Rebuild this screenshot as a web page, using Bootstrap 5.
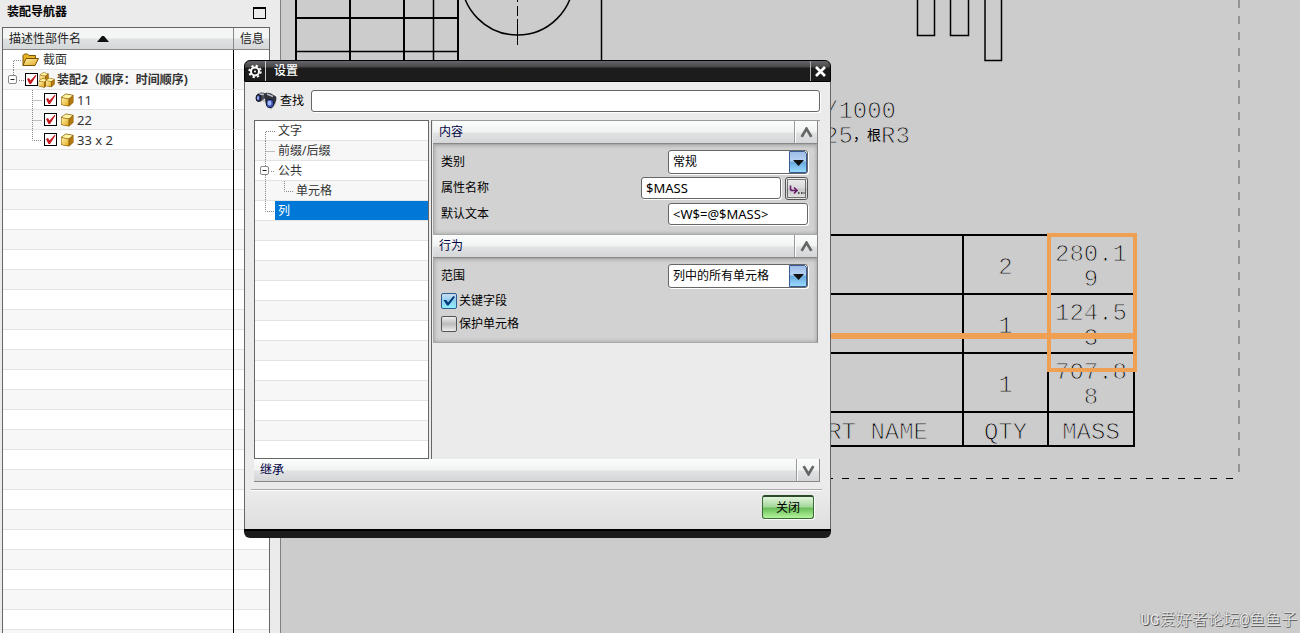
<!DOCTYPE html>
<html lang="zh-CN">
<head>
<meta charset="utf-8">
<meta name="viewport" content="width=device-width, initial-scale=1">
<title>设置</title>
<link href="https://cdn.jsdelivr.net/npm/bootstrap@5.3.0/dist/css/bootstrap.min.css" rel="stylesheet">
<script src="https://cdn.jsdelivr.net/npm/bootstrap@5.3.0/dist/js/bootstrap.bundle.min.js"></script>
<style>
  body { font: 12px/20px "Noto Sans", "Noto Sans CJK SC", sans-serif; color: #000; background: #ccc; }
  svg { display: block; flex: none; }
  .latin { font-size: 13px; }

  /* navigator */
  .navigator { width: 281px; background: #ebebeb; border-right: 1px solid #808080; padding: 0 10px 0 2px; }
  .navigator h1 { font-size: 12px; line-height: 20px; height: 27px; padding: 2px 4px 0 5px; }
  .max-btn { width: 13px; height: 12px; margin-top: 5px; border: 1px solid #000; border-top-width: 2px; background: none; padding: 0; }
  .parts-frame { border: 1px solid #666; border-bottom: 0; background: #fff; min-height: 0; }
  .parts { height: 100%; table-layout: fixed; border-collapse: separate; border-spacing: 0; }
  .parts th { height: 22px; padding: 0 0 0 6px; white-space: nowrap; font-weight: 400; color: #222; background: linear-gradient(#f4f5f5 0 10px, #dfe1e2 11px, #d5d8d9); border-bottom: 1px solid #888; }
  .parts th + th { width: 36px; border-left: 1px solid #888; }
  .parts td { height: 20px; padding: 0; border-bottom: 1px solid #e3e3e3; color: #333; }
  .parts td + td { border-left: 1px solid #000; }
  .parts tr:nth-child(even) td { background: #f7f7f7; }
  .parts td > div { height: 19px; }
  .parts tr.filler:last-child td { height: auto; border-bottom: 0; background: repeating-linear-gradient(#f7f7f7 0 19px, #e3e3e3 19px 20px, #fff 20px 39px, #e3e3e3 39px 40px); }
  .part-icon { margin: 0 3px; }
  .part-check { appearance: none; width: 13px; height: 13px; flex: none; margin: 0; border: 1px solid #000; background: #fff; }
  .part-check:checked { background: #fff url("data:image/svg+xml,%3Csvg xmlns='http://www.w3.org/2000/svg' viewBox='0 0 11 11'%3E%3Cpath d='M1 5l2-1 1.500 2.500L9.500 1 10.500 1.500 5 10H3.500z' fill='%23c4161c'/%3E%3C/svg%3E"); }

  /* bill of materials on the sheet; the background-coloured stroke thins the letters to pen lines */
  .bom { position: absolute; top: 234px; left: 319px; width: 535px; font: 24px/25px "Liberation Mono", monospace; color: #000; -webkit-text-stroke: 1px #ccc; text-align: center; border-collapse: collapse; table-layout: fixed; }
  .bom td, .bom th { height: 59px; padding: 6px 0 1px; border: 2px solid #000; vertical-align: middle; font-weight: 400; }
  .bom tfoot th { height: 34px; padding: 6px 0 0; }
  .bom tfoot th:first-child { text-align: right; padding-right: 34px; }
  .bom .qty { width: 85px; }
  .bom .mass { width: 86px; }
  .bom .mass span { display: block; white-space: nowrap; }
  .mark-frame { position: absolute; top: 233px; left: 766px; width: 90px; height: 139px; border: 4px solid #f0a052; }
  .mark-line { position: absolute; top: 333px; left: 540px; width: 315px; height: 6px; background: #f0a052; }
  .cad-note { font: 24px "Liberation Mono", "Noto Sans CJK SC", monospace; fill: #000; stroke: #ccc; stroke-width: 1px; }
  .cad-han { font-size: 14px; stroke: none; }
  .credit { position: absolute; right: 3px; bottom: 0; font: 300 16px/24px "Liberation Mono", "Noto Sans CJK SC", monospace; color: #e8e8e8; text-shadow: -1px 0 #999, 1px 1px #555; }

  /* floating dialog */
  .dlg { position: absolute; top: 60px; left: 244px; width: 587px; border: 0; }
  .dlg-title { height: 22px; border: 1px solid #000; border-radius: 6px 6px 0 0; background: linear-gradient(#66666a, #48484b 6px, #1c1c1c 7px); color: #fff; }
  .dlg-title h2 { font-size: 12px; line-height: 20px; font-weight: 500; padding-left: 8px; border-left: 1px solid #ccc; }
  .dlg-title button { width: 20px; height: 20px; padding: 0; background: none; border: 0; border-left: 1px solid #aaa; }
  .dlg-main { background: linear-gradient(#ebebeb 0 410px, #dedede); border: solid #666; border-width: 0 1px; padding: 8px 10px 10px 9px; }
  .dlg-foot { height: 9px; background: #1c1c1c; border-top: 2px solid #000; border-radius: 0 0 6px 6px; }
  .field { height: 22px; border: 1px solid #666; border-radius: 3px; background-color: #fff; padding: 0 4px; color: #000; line-height: 18px; box-shadow: 1px 1px 0 #fff; min-width: 0; }
  .find-label { padding: 0 7px 0 2px; }
  .w-field { width: 140px; }
  select.field { appearance: none; height: 24px; font-size: 12px; background: #fff url("data:image/svg+xml,%3Csvg xmlns='http://www.w3.org/2000/svg' width='18' height='22'%3E%3Cdefs%3E%3ClinearGradient id='g' x2='0' y2='1'%3E%3Cstop stop-color='%239dbce6'/%3E%3Cstop offset='.45' stop-color='%23b8d3f2'/%3E%3Cstop offset='.5' stop-color='%2368a8dd'/%3E%3Cstop offset='1' stop-color='%239bdcff'/%3E%3C/linearGradient%3E%3C/defs%3E%3Cpath d='M.5.500h15l2 2V21.500H.500z' fill='url(%23g)' stroke='%23365a94'/%3E%3Cpath d='M4 9h11l-5.500 6z' fill='%23111'/%3E%3C/svg%3E") no-repeat right 0 top 0; }
  .settings-tree { width: 175px; min-height: 339px; border: 1px solid #666; background: #fff repeating-linear-gradient(#fff 0 19px, #e3e3e3 19px 20px, #f7f7f7 20px 39px, #e3e3e3 39px 40px); color: #333; }
  .settings-tree li { height: 20px; }
  .settings-tree a { color: inherit; text-decoration: none; line-height: 20px; padding-left: 3px; }
  .settings-tree .active { background: #0078d7; color: #fff; height: 19px; }
  .options { border-left: 1px solid #666; border-top: 1px solid #999; margin-left: 2px; padding: 0 2px 0 1px; }
  .bar { height: 23px; background: linear-gradient(#fbfcfc, #f1f3f3 11px, #e0e2e3 12px, #d4d6d8); border-bottom: 1px solid #888; border-right: 1px solid #888; }
  .bar h3 { font-size: 12px; line-height: 22px; font-weight: 400; color: #004; padding-left: 6px; }
  .bar button { width: 23px; padding: 0; border: 0; border-left: 1px solid #999; background: none; box-shadow: inset 1px 0 #fff; }
  .group { background: #d2d2d2; border: 1px solid #aaa; border-right-color: #888; box-shadow: inset 0 0 4px #999; padding: 4px 9px 7px 7px; }
  .option-row { height: 26px; }
  .check-row { height: 23px; }
  .check-row label { padding-left: 2px; }
  .tick { appearance: none; width: 16px; height: 16px; margin: 0; border: 1px solid #555; border-radius: 2px; background: linear-gradient(#eee, #bbb 7px, #eee); }
  .tick:checked { border-color: #2e5c8c; background: url("data:image/svg+xml,%3Csvg xmlns='http://www.w3.org/2000/svg' viewBox='0 0 14 14'%3E%3Cpath d='M1.500 6h3L6 8.500 11.500 2 13 3 6.500 11.500H5z' fill='%23003a78'/%3E%3C/svg%3E"), linear-gradient(#c9dcf0, #8fd0f0 7px, #8ff0ff); }
  .pick { width: 23px; height: 23px; padding: 1px; border: 1px solid #555; border-radius: 3px; background: linear-gradient(#eee, #d8d8d8 10px, #c8c8c8 11px, #e4e4e4); }
  .rule { border-top: 1px solid #aaa; border-bottom: 1px solid #fff; height: 2px; margin: 7px -2px 4px -3px; }
  .close-btn { width: 52px; height: 24px; margin-right: 6px; border: 1px solid #3a6a35; border-top: 2px solid #2c4a2a; border-radius: 3px; padding: 0; line-height: 20px; color: #000; background: linear-gradient(#e2f4dc, #a3d798 10px, #68bd57 11px, #b4f49d); box-shadow: 1px 1px 0 #fff; }
</style>
</head>
<body class="vh-100 overflow-hidden d-flex position-relative">

<svg width="0" height="0" class="position-absolute" aria-hidden="true">
  <defs>
    <linearGradient id="gold" x1="0" y1="0" x2="1" y2="1"><stop stop-color="#fff3a8"/><stop offset="1" stop-color="#dfa820"/></linearGradient>
    <symbol id="cube" viewBox="0 0 14 14">
      <path d="M1 4l5-3.500 7.500 1.500v7.500L9 13.500 1 12z" fill="#8a5a08"/>
      <path d="M1.500 4.300L6 1.200l6.500 1.300L9 5.400z" fill="#fff2a0"/>
      <path d="M1.500 5l7 1v6.700l-7-1.200z" fill="url(#gold)"/>
      <path d="M9.500 6l3.500-3v6l-3.500 4z" fill="#b47a10"/>
    </symbol>
    <symbol id="branch" viewBox="0 0 41 20">
      <path d="M29.500 0v20M29.500 10.500h9" fill="none" stroke="#888" stroke-dasharray="1 1"/>
    </symbol>
    <symbol id="minus" viewBox="0 0 10 10">
      <rect x=".5" y=".5" width="8" height="8" rx="1.500" fill="#fff" stroke="#888"/><path d="M2.500 4.500h4" stroke="#222"/>
    </symbol>
    <symbol id="chevron" viewBox="0 0 12 10"><path d="M1.500 9L6 1.500 10.500 9" fill="none" stroke="#666" stroke-width="2.500"/></symbol>
  </defs>
</svg>

<aside class="navigator d-flex flex-column h-100 flex-shrink-0">
  <h1 class="m-0 fw-bold d-flex justify-content-between">装配导航器<button class="max-btn" aria-label="最大化"></button></h1>
  <div class="parts-frame flex-grow-1">
    <table class="parts w-100">
      <thead>
        <tr><th><span class="d-flex align-items-center">描述性部件名<svg class="ms-3" width="12" height="6" viewBox="0 0 12 6"><path d="M0 6L5 0h2l5 6z" fill="#111"/></svg></span></th><th>信息</th></tr>
      </thead>
      <tbody>
        <tr><td><div class="d-flex align-items-center">
          <svg width="19" height="20" viewBox="0 0 19 20"><path d="M10.500 20v-9.500H19" fill="none" stroke="#888" stroke-dasharray="1 1"/></svg>
          <svg width="17" height="14" viewBox="0 0 17 14"><path d="M1 12.500V2.500L2.500 1h3L7 2.500h6.500V5" fill="#e6b422" stroke="#7a5205"/><path d="M1 12.500L4 5.500h12.500l-3.500 7z" fill="url(#gold)" stroke="#7a5205"/></svg>
          <span class="ps-1">截面</span></div></td><td></td></tr>
        <tr><td><div class="d-flex align-items-center">
          <svg width="22" height="20" viewBox="0 0 22 20"><path d="M10.500 0v6M16 10.500h5" fill="none" stroke="#888" stroke-dasharray="1 1"/><use href="#minus" x="5" y="5" width="10" height="10"/></svg>
          <input class="part-check" type="checkbox" checked aria-label="装配2">
          <svg width="19" height="16" viewBox="0 0 19 16"><use href="#cube" x="1" y="0" width="10" height="10"/><use href="#cube" x="0" y="6" width="10" height="10"/><use href="#cube" x="7" y="5" width="10" height="11"/></svg>
          <strong class="text-nowrap">装配2（顺序：时间顺序)</strong></div></td><td></td></tr>
        <tr><td><div class="d-flex align-items-center">
          <svg width="41" height="20"><use href="#branch"/></svg><input class="part-check" type="checkbox" checked id="p11">
          <svg class="part-icon" width="14" height="14"><use href="#cube"/></svg><label class="latin" for="p11">11</label></div></td><td></td></tr>
        <tr><td><div class="d-flex align-items-center">
          <svg width="41" height="20"><use href="#branch"/></svg><input class="part-check" type="checkbox" checked id="p22">
          <svg class="part-icon" width="14" height="14"><use href="#cube"/></svg><label class="latin" for="p22">22</label></div></td><td></td></tr>
        <tr><td><div class="d-flex align-items-center">
          <svg width="41" height="20" viewBox="0 0 41 20"><path d="M29.500 0v10.500h9" fill="none" stroke="#888" stroke-dasharray="1 1"/></svg><input class="part-check" type="checkbox" checked id="p33">
          <svg class="part-icon" width="14" height="14"><use href="#cube"/></svg><label class="latin" for="p33">33 x 2</label></div></td><td></td></tr>
        <tr class="filler"><td></td><td></td></tr>
      </tbody>
    </table>
  </div>
</aside>

<main class="flex-grow-1 position-relative overflow-hidden">
  <svg class="position-absolute top-0 start-0 w-100 h-100">
    <g transform="translate(-281 0)" fill="none" stroke="#000">
      <path stroke-width="2" d="M296 0v62M350 0v62M404 0v62M458 0v62M295 18h164"/>
      <path d="M296 51.500h162M433.500 0v60M601.500 0v62" stroke-width="1.500"/>
      <circle cx="517.500" cy="-21" r="56" stroke-width="1.500"/>
      <path d="M517.500 0v2M517.500 6v10M517.500 19v26"/>
      <path stroke-width="1.500" d="M917.500 0v35.500h17V0M950.500 0v35.500h18V0M985 0v60.500h16.500V0"/>
      <path d="M1239 0V478" stroke="#949494" stroke-width="2" stroke-dasharray="8 8"/>
      <path d="M822 478.500h416" stroke-dasharray="7 9" stroke-dashoffset="-4"/>
    </g>
    <text class="cad-note" x="543" y="118">/1000</text>
    <text class="cad-note" x="543" y="143">25</text>
    <text class="cad-note cad-han" x="572" y="140">，根</text>
    <text class="cad-note" x="600" y="143">R3</text>
  </svg>

  <table class="bom">
    <colgroup><col><col class="qty"><col class="mass"></colgroup>
    <tbody>
      <tr><td></td><td>2</td><td class="mass"><span>280.1</span><span>9</span></td></tr>
      <tr><td></td><td>1</td><td class="mass"><span>124.5</span><span>3</span></td></tr>
      <tr><td></td><td>1</td><td class="mass"><span>707.8</span><span>8</span></td></tr>
    </tbody>
    <tfoot><tr><th>PART NAME</th><th>QTY</th><th>MASS</th></tr></tfoot>
  </table>
  <div class="mark-frame"></div>
  <div class="mark-line"></div>
  <div class="credit">UG爱好者论坛@鱼鱼子</div>
</main>

<section class="dlg" role="dialog" aria-labelledby="dlg-name">
  <header class="dlg-title d-flex align-items-center">
    <svg width="20" height="20" viewBox="0 0 20 20"><circle cx="10" cy="10.500" r="4" fill="none" stroke="#fff" stroke-width="2"/><circle cx="10" cy="10.500" r="5.700" fill="none" stroke="#fff" stroke-width="2" stroke-dasharray="2.240 2.240"/><circle cx="10" cy="10.500" r="1" fill="#fff"/></svg>
    <h2 class="m-0 flex-grow-1" id="dlg-name">设置</h2>
    <button aria-label="关闭窗口"><svg width="19" height="20" viewBox="0 0 19 20"><path d="M5 6l9 9M14 6l-9 9" stroke="#fff" stroke-width="2.800"/></svg></button>
  </header>

  <div class="dlg-main">
    <div class="d-flex align-items-center mb-2">
      <svg width="24" height="20" viewBox="0 0 24 20">
        <path d="M4 9l9 3 4 7 5-6-4-4z" fill="#aaa" opacity=".6"/>
        <path d="M3 3.500C6 1 9 1 12 3l1 3-7 5-3-2z" fill="#4a4c56"/><path d="M10 3c2-2 5-1.500 7-.5l5 3c1 2 0 5-1 7l-4 4-5-3z" fill="#30323c"/>
        <path d="M5 3l5 .5M13 3l6 2.500" stroke="#bcbec8" stroke-width="1.500"/>
        <ellipse cx="4.500" cy="7" rx="2.500" ry="3.500" fill="#2a3880" stroke="#111"/><ellipse cx="4" cy="7" rx="1" ry="2" fill="#a0b4f4"/>
        <ellipse cx="16" cy="12.500" rx="3.700" ry="4.200" fill="#3c50b0" stroke="#15162a"/><ellipse cx="15.500" cy="12" rx="2" ry="2.500" fill="#a0b4f8"/>
      </svg>
      <label for="find" class="find-label">查找</label>
      <input id="find" class="field flex-grow-1" type="text">
    </div>

    <div class="d-flex">
      <ul class="settings-tree list-unstyled m-0 flex-shrink-0">
        <li class="d-flex"><svg width="20" height="20"><path d="M10.500 20v-9.500H20" fill="none" stroke="#888" stroke-dasharray="1 1"/></svg><a href="#">文字</a></li>
        <li class="d-flex"><svg width="20" height="20"><path d="M10.500 0v20M10.500 10.500H20" fill="none" stroke="#888" stroke-dasharray="1 1"/></svg><a href="#">前缀/后缀</a></li>
        <li class="d-flex"><svg width="20" height="20"><path d="M10.500 0v20M16 10.500h4" fill="none" stroke="#888" stroke-dasharray="1 1"/><use href="#minus" x="5" y="5" width="10" height="10"/></svg><a href="#">公共</a></li>
        <li class="d-flex"><svg width="38" height="20"><path d="M10.500 0v20M29.500 0v10.500H38" fill="none" stroke="#888" stroke-dasharray="1 1"/></svg><a href="#">单元格</a></li>
        <li class="d-flex"><svg width="20" height="20"><path d="M10.500 0v10.500H20" fill="none" stroke="#888" stroke-dasharray="1 1"/></svg><a href="#" class="active flex-grow-1" aria-current="true">列</a></li>
      </ul>

      <div class="options flex-grow-1">
        <div class="bar d-flex"><h3 class="m-0 flex-grow-1">内容</h3><button aria-label="收起内容"><svg class="m-auto" width="13" height="11"><use href="#chevron"/></svg></button></div>
        <div class="group">
          <div class="option-row d-flex align-items-center justify-content-between"><label for="kind">类别</label><select id="kind" class="field w-field"><option>常规</option></select></div>
          <div class="option-row d-flex align-items-center"><label for="attr" class="flex-grow-1">属性名称</label><input id="attr" class="field w-field latin" type="text" value="$MASS">
            <button class="pick ms-1" aria-label="选择属性"><svg width="19" height="19" viewBox="0 0 19 19"><rect x=".5" y=".5" width="18" height="18" fill="none" stroke="#000" stroke-dasharray="1 1"/><path d="M3.500 6.500v3.500c0 1.500 1 1.500 2 1.500H9M7 8.500l3 3-3 3" fill="none" stroke="#6a1a6a" stroke-width="1.600"/><path d="M11 14h1.500M14 14h1.500M16.500 14h1" stroke="#222" stroke-width="1.500"/></svg></button></div>
          <div class="option-row d-flex align-items-center justify-content-between"><label for="deftext">默认文本</label><input id="deftext" class="field w-field latin" type="text" value="&lt;W$=@$MASS&gt;"></div>
        </div>
        <div class="bar d-flex"><h3 class="m-0 flex-grow-1">行为</h3><button aria-label="收起行为"><svg class="m-auto" width="13" height="11"><use href="#chevron"/></svg></button></div>
        <div class="group">
          <div class="option-row d-flex align-items-center justify-content-between"><label for="scope">范围</label><select id="scope" class="field w-field"><option>列中的所有单元格</option></select></div>
          <div class="check-row d-flex align-items-center"><input id="keyf" class="tick" type="checkbox" checked><label for="keyf">关键字段</label></div>
          <div class="check-row d-flex align-items-center"><input id="prot" class="tick" type="checkbox"><label for="prot">保护单元格</label></div>
        </div>
      </div>
    </div>

    <div class="bar d-flex"><h3 class="m-0 flex-grow-1">继承</h3><button aria-label="展开继承"><svg class="m-auto" width="13" height="11" viewBox="0 0 12 10"><path d="M1.500 1L6 8.500 10.500 1" fill="none" stroke="#666" stroke-width="2.500"/></svg></button></div>
    <div class="rule"></div>
    <div class="d-flex justify-content-end"><button class="close-btn">关闭</button></div>
  </div>
  <div class="dlg-foot"></div>
</section>
</body>
</html>
